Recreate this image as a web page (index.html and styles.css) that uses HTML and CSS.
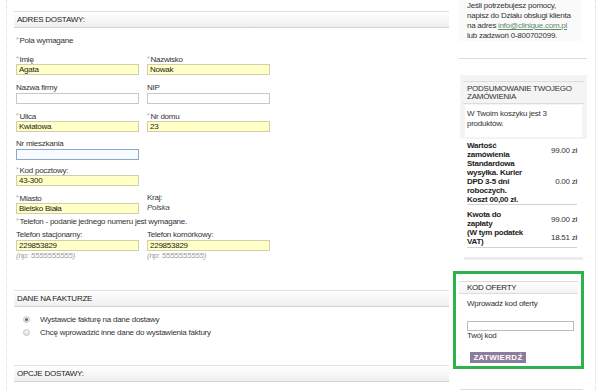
FILE: index.html
```html
<!doctype html>
<html>
<head>
<meta charset="utf-8">
<title>Zamówienie - dostawa</title>
<link rel="stylesheet" href="styles.css">
</head>
<body>
<div class="page">
	<div class="main">
		<div class="sec-head">ADRES DOSTAWY:</div>
		<p class="req"><span class="ast">*</span>Pola wymagane</p>

		<div class="row r1">
			<div class="field"><label><span class="ast">*</span>Imię</label><input class="inp fill" value="Agata" readonly></div>
			<div class="field"><label><span class="ast">*</span>Nazwisko</label><input class="inp fill" value="Nowak" readonly></div>
		</div>
		<div class="row r2">
			<div class="field"><label>Nazwa firmy</label><input class="inp" value="" readonly></div>
			<div class="field"><label>NIP</label><input class="inp" value="" readonly></div>
		</div>
		<div class="row r3">
			<div class="field"><label><span class="ast">*</span>Ulica</label><input class="inp fill" value="Kwiatowa" readonly></div>
			<div class="field"><label><span class="ast">*</span>Nr domu</label><input class="inp fill" value="23" readonly></div>
		</div>
		<div class="row r4">
			<div class="field"><label>Nr mieszkania</label><input class="inp focus" value="" readonly></div>
		</div>
		<div class="row r5">
			<div class="field"><label><span class="ast">*</span>Kod pocztowy:</label><input class="inp fill" value="43-300" readonly></div>
		</div>
		<div class="row r6">
			<div class="field"><label><span class="ast">*</span>Miasto</label><input class="inp fill" value="Bielsko Biała" readonly></div>
			<div class="field"><label>Kraj:</label><span class="country">Polska</span></div>
		</div>
		<p class="phone-note"><span class="ast">*</span>Telefon - podanie jednego numeru jest wymagane.</p>
		<div class="row r7">
			<div class="field"><label>Telefon stacjonarny:</label><input class="inp fill" value="229853829" readonly><span class="hint">(np: 5555555555)</span></div>
			<div class="field"><label>Telefon komórkowy:</label><input class="inp fill" value="229853829" readonly><span class="hint">(np: 5555555555)</span></div>
		</div>

		<div class="sec-head invoice">DANE NA FAKTURZE</div>
		<ul class="radios">
			<li><span class="radio on"></span>Wystawcie fakturę na dane dostawy</li>
			<li><span class="radio"></span>Chcę wprowadzić inne dane do wystawienia faktury</li>
		</ul>

		<div class="sec-head delivery">OPCJE DOSTAWY:</div>
	</div>

	<div class="side">
		<div class="help">Jeśli potrzebujesz pomocy,<br>napisz do Działu obsługi klienta<br>na adres <a href="javascript:;">info@clinique.com.pl</a><br>lub zadzwoń 0-800702099.</div>
		<div class="rule"></div>

		<div class="summary">
			<div class="sum-head">PODSUMOWANIE TWOJEGO<br>ZAMÓWIENIA</div>
			<div class="sum-body">W Twoim koszyku jest 3<br>produktów.</div>
		</div>
		<table class="totals">
			<tr><th>Wartość<br>zamówienia</th><td>99.00 zł</td></tr>
			<tr class="sep"><th>Standardowa<br>wysyłka. Kurier<br>DPD 3-5 dni<br>roboczych.<br>Koszt 00,00 zł.</th><td>0.00 zł</td></tr>
			<tr class="pad"><th>Kwota do<br>zapłaty</th><td>99.00 zł</td></tr>
			<tr class="sep last"><th>(W tym podatek<br>VAT)</th><td>18.51 zł</td></tr>
		</table>
		<div class="strip"></div>

		<div class="promo">
			<div class="promo-head">KOD OFERTY</div>
			<div class="promo-body">
				<p>Wprowadź kod oferty</p>
				<input class="code" value="" readonly>
				<p>Twój kod</p>
				<a class="btn" href="javascript:;">ZATWIERDŹ</a>
			</div>
		</div>
		<div class="rule bottom"></div>
	</div>
</div>
</body>
</html>
```

FILE: styles.css
```css
*{ margin:0; padding:0; list-style:none;}
body{ font:8px/10px "Liberation Sans", Arial, sans-serif; letter-spacing:-0.25px; color:#333; background:#fff; overflow:hidden;}
.page{ display:flex; margin-left:6px; width:588px; min-height:390px; border-left:1px dotted #d9d9d9; border-right:1px dotted #d9d9d9;}

/* main column */
.main{ width:435px; margin-left:7px; padding-top:11px;}
.sec-head{ height:15px; line-height:15px; padding-left:3px; border-top:1px solid #e0e0e0; border-bottom:1px solid #d2d2d2; background:linear-gradient(#fff,#efefef); color:#222;}
.sec-head.invoice{ margin-top:29px;}
.sec-head.delivery{ margin-top:26px;}
.req{ margin:7px 0 0 2px;}
.ast{ color:#aaa; font-size:7px; vertical-align:1px; margin-right:1px;}

.row{ display:flex; gap:8px; padding-left:2px;}
.r1{ margin-top:8px; margin-bottom:8px;}
.r2,.r3,.r5{ margin-bottom:7px;}
.r4{ margin-bottom:5px;}
.r6{ margin-bottom:2px;}
.field{ width:123px; display:flex; flex-direction:column;}
.field label{ display:block; height:10px; color:#333;}
.inp{ display:block; box-sizing:border-box; width:123px; height:11px; border:1px solid #c8c8c8; background:#fff; padding:0 2px; font:inherit; line-height:9px; letter-spacing:inherit; color:#222; outline:none;}
.inp.fill{ background:#ffffc6; border-color:#cfcfae;}
.inp.focus{ background:#f8fbff; border-color:#8ea7c6;}
.country{ font-style:italic; color:#444;}
.phone-note{ margin-left:2px;}
.r7{ margin-top:3px;}
.hint{ font-style:italic; color:#9a9a9a; line-height:10px;}

.radios{ margin-top:6px; padding-left:9px;}
.radios li{ display:flex; align-items:center; height:13px;}
.radio{ box-sizing:border-box; width:7px; height:7px; border:1px solid #c4c4c4; border-radius:50%; background:linear-gradient(#f6f6f6,#dedede); margin-right:10px; position:relative;}
.radio.on:after{ content:""; position:absolute; left:1px; top:1px; width:3px; height:3px; border-radius:50%; background:#666;}

/* sidebar */
.side{ width:134px; margin-left:4px;}
.help{ margin:0 5px; background:#fafafa; padding:1px 0 0 9px; line-height:10px; color:#333;}
.help a{ color:#5f8a6e; text-decoration:underline;}
.rule{ margin:17px 0 0 6px; border-top:1px solid #dcdcdc;}
.rule.bottom{ margin:20px 4px 0 7px;}

.summary{ margin:16px 0 0 7px; background:#f4f4f4; padding:6px 3px 2px;}
.sum-head{ border-top:1px solid #dcdcdc; border-bottom:1px solid #dcdcdc; padding:3px 4px 2px; line-height:8px;}
.sum-body{ background:#fff; margin:1px 2px 0; padding:4px 2px 8px; line-height:10px;}

.totals{ margin:2px 10px 0 14px; width:110px; border-collapse:collapse; line-height:9px;}
.totals th{ text-align:left; font-weight:bold; color:#222; padding:0; white-space:nowrap;}
.totals td{ text-align:right; padding:0; white-space:nowrap; vertical-align:middle; color:#333;}
.totals tr.sep th,.totals tr.sep td{ border-bottom:1px solid #d2d2d2;}
.totals tr.pad th,.totals tr.pad td{ padding-top:5px;}
.totals tr.last th,.totals tr.last td{ padding-bottom:1px;}
.strip{ margin:9px 4px 0 11px; height:3px; background:#ececec;}

.promo{ margin:11px 3px 0 0; border:3px solid #2db34b; padding:0 3px 3px;}
.promo-head{ margin:7px 0 0 0; height:11px; line-height:11px; padding-left:8px; border-top:1px solid #dcdcdc; border-bottom:1px solid #dcdcdc; background:linear-gradient(#fff,#f3f3f3); color:#222;}
.promo-body{ padding-left:8px;}
.promo-body p{ line-height:10px;}
.promo-body p:first-child{ margin-top:5px;}
.code{ display:block; box-sizing:border-box; width:107px; height:10px; margin-top:12px; border:1px solid #bdbdbd; background:#fff; font:inherit; outline:none;}
.btn{ display:block; width:56px; height:11px; margin:11px 0 0 3px; background:#8c7c9b; color:#fff; font-weight:bold; text-align:center; line-height:11px; letter-spacing:0.3px; text-decoration:none;}
```
